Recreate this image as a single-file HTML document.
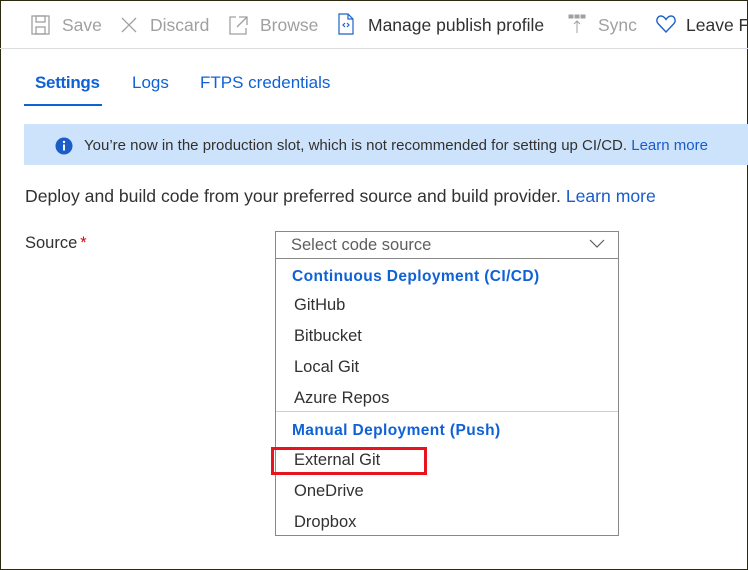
<!DOCTYPE html>
<html><head><style>
body{margin:0;width:748px;height:570px;overflow:hidden;background:#fff;font-family:"Liberation Sans",sans-serif;position:relative}
.frame{position:absolute;left:0;top:0;width:746px;height:568px;border:1px solid #2b2a10;}
.a{position:absolute;white-space:nowrap}
.tb{font-size:17.5px;color:#a0a0a0;top:15px}
.it{font-size:16.5px;color:#323130;left:294px}
.hd{font-size:15.5px;color:#0f62d6;font-weight:bold;left:292px;letter-spacing:0.4px}
</style></head><body>
<div class="frame"></div>
<svg class="a" style="left:30px;top:14px" width="22" height="22" viewBox="0 0 22 22" fill="none" stroke="#a0a0a0" stroke-width="1.3"><rect x="2" y="2" width="17" height="18"/><rect x="6" y="2" width="9" height="6"/><rect x="6" y="13" width="9" height="7"/></svg>
<div class="a tb" style="left:62px">Save</div>
<svg class="a" style="left:120px;top:16px" width="18" height="18" stroke="#a0a0a0" stroke-width="1.3"><path d="M2 2L16 16M16 2L2 16"/></svg>
<div class="a tb" style="left:150px">Discard</div>
<svg class="a" style="left:228px;top:14px" width="22" height="22" fill="none" stroke="#a0a0a0" stroke-width="1.3"><path d="M8 3H2V20H18V14M11 3H19V11M19 3L9 13"/></svg>
<div class="a tb" style="left:260px">Browse</div>
<svg class="a" style="left:337px;top:13px" width="18" height="22" fill="none" stroke="#1a64c8" stroke-width="1.2"><path d="M2 1H11L16 6V21H2Z M11 1V6H16"/><path d="M8 10L6 12L8 14M10 10L12 12L10 14"/></svg>
<div class="a tb" style="left:368px;color:#323130">Manage publish profile</div>
<svg class="a" style="left:568px;top:14px" width="18" height="20" stroke="#a0a0a0" fill="#a0a0a0"><rect x="1" y="1" width="4" height="3"/><rect x="7" y="1" width="4" height="3"/><rect x="13" y="1" width="4" height="3"/><path d="M9 7V19M6 10L9 7L12 10" fill="none"/></svg>
<div class="a tb" style="left:598px">Sync</div>
<svg class="a" style="left:655px;top:13px" width="22" height="22" fill="none" stroke="#1a64c8" stroke-width="1.4"><path d="M11 19L3 10.5C0.5 7.5 2.5 3 6 3C8.5 3 10 5 11 6.5C12 5 13.5 3 16 3C19.5 3 21.5 7.5 19 10.5Z"/></svg>
<div class="a tb" style="left:686px;color:#323130">Leave Fe</div>
<div class="a" style="left:0;top:48px;width:748px;height:1px;background:#ddd"></div>
<div class="a" style="left:35px;top:73px;font-size:17px;color:#0f62d6;font-weight:bold;letter-spacing:-0.3px">Settings</div>
<div class="a" style="left:24px;top:104px;width:78px;height:2px;background:#0f62d6"></div>
<div class="a" style="left:132px;top:73px;font-size:17px;color:#0f62d6">Logs</div>
<div class="a" style="left:200px;top:73px;font-size:17px;color:#0f62d6">FTPS credentials</div>
<div class="a" style="left:24px;top:124px;width:724px;height:41px;background:#cde3fb"></div>
<svg class="a" style="left:55px;top:137px" width="18" height="18"><circle cx="9" cy="9" r="8.5" fill="#1a5cc8"/><rect x="8" y="7.5" width="2" height="6" fill="#fff"/><circle cx="9" cy="5" r="1.2" fill="#fff"/></svg>
<div class="a" style="left:84px;top:137px;font-size:15px;color:#323130">You’re now in the production slot, which is not recommended for setting up CI/CD. <span style="color:#1a5cc8">Learn more</span></div>
<div class="a" style="left:25px;top:186px;font-size:17.6px;color:#323130">Deploy and build code from your preferred source and build provider. <span style="color:#1a5cc8">Learn more</span></div>
<div class="a" style="left:25px;top:234px;font-size:16.5px;color:#323130">Source<span style="color:#d00;margin-left:3px">*</span></div>
<div class="a" style="left:275px;top:231px;width:342px;height:26px;border:1px solid #888"></div>
<div class="a" style="left:291px;top:236px;font-size:16.5px;color:#605e5c">Select code source</div>
<svg class="a" style="left:589px;top:239px" width="16" height="10" fill="none" stroke="#605e5c" stroke-width="1.2"><path d="M1 1L8 8L15 1"/></svg>
<div class="a" style="left:275px;top:258px;width:342px;height:277px;border:1px solid #888;border-top:none"></div>
<div class="a hd" style="top:268px">Continuous Deployment (CI/CD)</div>
<div class="a it" style="top:296px">GitHub</div>
<div class="a it" style="top:327px">Bitbucket</div>
<div class="a it" style="top:358px">Local Git</div>
<div class="a it" style="top:389px">Azure Repos</div>
<div class="a" style="left:276px;top:411px;width:342px;height:1px;background:#c8d1d9"></div>
<div class="a hd" style="top:422px">Manual Deployment (Push)</div>
<div class="a it" style="top:451px">External Git</div>
<div class="a" style="left:271px;top:447px;width:150px;height:22px;border:3px solid #e8141d"></div>
<div class="a it" style="top:482px">OneDrive</div>
<div class="a it" style="top:513px">Dropbox</div>
</body></html>
